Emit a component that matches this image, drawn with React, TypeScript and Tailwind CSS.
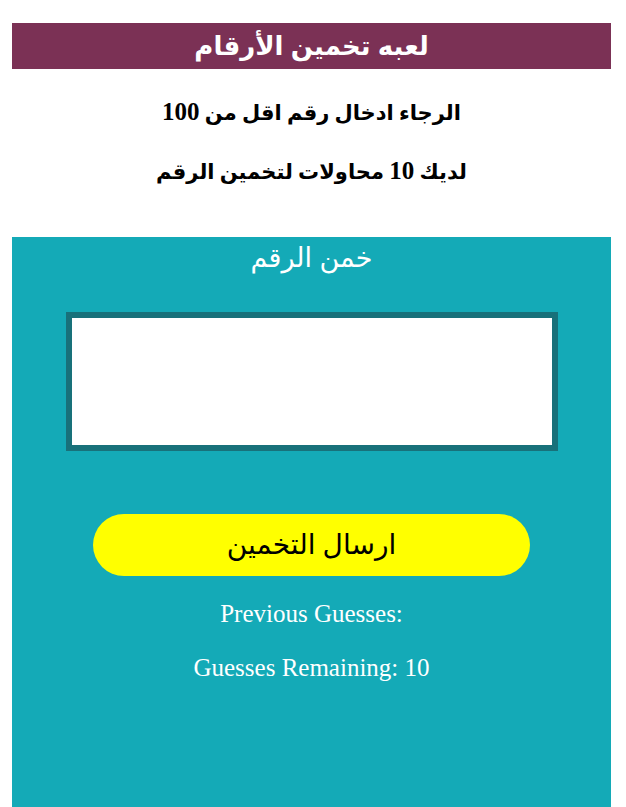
import React, { useState } from 'react';

export default function App() {
  const [guess, setGuess] = useState('');

  return (
    <div className="min-h-[807px] bg-white pl-[12px] pr-[15px] pt-[23px] font-['Liberation_Serif','DejaVu_Sans',serif]">
      <div dir="rtl" className="flex h-[46px] items-center justify-center bg-[#7b3155] font-['Liberation_Sans','DejaVu_Sans',sans-serif] text-[26px] font-bold text-white">
        لعبه تخمين الأرقام
      </div>

      <div dir="rtl" className="flex flex-col items-center pt-[30px] pb-[51px] text-[21px] font-bold leading-[28px] text-black">
        <p className="h-[28px]">الرجاء ادخال رقم اقل من <span className="text-[25px] leading-none">100</span></p>
        <p className="mt-[31px] h-[28px]">لديك <span className="text-[25px] leading-none">10</span> محاولات لتخمين الرقم</p>
      </div>

      <div className="flex min-h-[570px] flex-col items-center bg-[#14aab7] pt-[4px] text-white">
        <h2 dir="rtl" className="font-['Liberation_Sans','DejaVu_Sans',sans-serif] text-[27px] leading-[34px]">خمن الرقم</h2>

        <input
          type="text"
          value={guess}
          onChange={e => setGuess(e.target.value)}
          className="mt-[37px] h-[139px] w-[492px] border-[6px] border-[#18717a] bg-white text-center text-[30px] text-black outline-none"
        />

        <button className="mt-[63px] h-[62px] w-[437px] rounded-full bg-[#ffff00] text-[28px] text-black">
          ارسال التخمين
        </button>

        <p className="mt-[24px] text-[25px] leading-[28px]">Previous Guesses:</p>
        <p className="mt-[26px] text-[25px] leading-[28px]">Guesses Remaining: 10</p>
      </div>
    </div>
  );
}
